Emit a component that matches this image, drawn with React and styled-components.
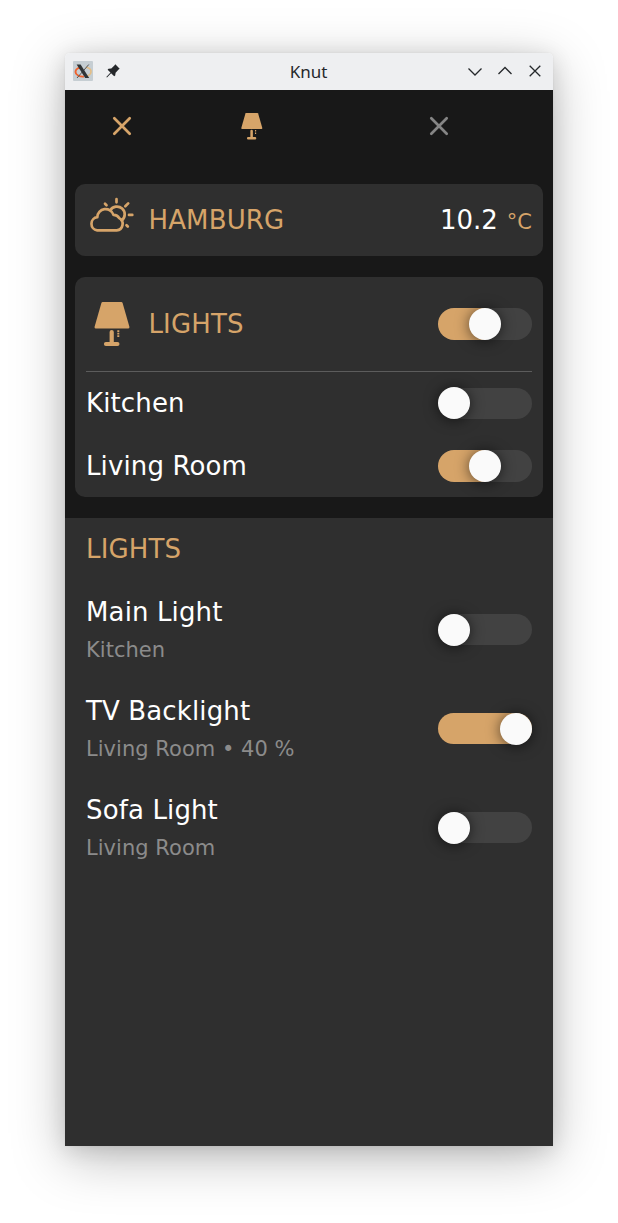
import React from "react";
import styled, { createGlobalStyle } from "styled-components";

const ACCENT = "#d6a469";

const GlobalStyle = createGlobalStyle`
  body {
    margin: 0;
    background: #fff;
    font-family: "DejaVu Sans", sans-serif;
  }
  svg { display: block; overflow: visible; }
`;

const Desktop = styled.div`
  box-sizing: border-box;
  height: 1223px;
  padding: 53px 65px 77px;
  overflow: hidden;
`;

const Window = styled.main`
  display: flex;
  flex-direction: column;
  height: 100%;
  border-radius: 5px 5px 0 0;
  box-shadow: 0 12px 54px rgba(0, 0, 0, 0.26), 0 4px 22px rgba(0, 0, 0, 0.12), 0 0 2px rgba(0, 0, 0, 0.08);
`;

const TitleBar = styled.header`
  display: grid;
  grid-template-columns: 1fr auto 1fr;
  align-items: center;
  height: 37px;
  box-sizing: border-box;
  padding: 0 10px 0 8px;
  background: #eeeff1;
  border-radius: 5px 5px 0 0;
`;

const Title = styled.h1`
  margin: 0;
  padding-left: 1px;
  font: 400 17px/24px "Noto Sans", sans-serif;
  color: #25282b;
`;

const TitleIcons = styled.div`
  display: flex;
  align-items: center;
  justify-content: ${(p) => (p.$end ? "flex-end" : "flex-start")};
  gap: ${(p) => (p.$end ? 14 : 13)}px;
  padding-bottom: ${(p) => (p.$end ? 2 : 1)}px;
`;

const Dashboard = styled.section`
  box-sizing: border-box;
  height: 428px;
  background: #181818;
`;

const Tabs = styled.nav`
  display: grid;
  grid-template-columns: 114px 146px 228px;
  align-items: center;
  justify-items: center;
  height: 72px;
  margin-bottom: 21.5px;
`;

const Card = styled.section`
  box-sizing: border-box;
  height: ${(p) => p.$height}px;
  margin: 0 10.4px 21px;
  padding: 0 10.6px;
  border-radius: 10px;
  background: #2f2f2f;
`;

const CardHeader = styled.div`
  display: flex;
  align-items: center;
  height: ${(p) => p.$height}px;
  border-bottom: ${(p) => (p.$divided ? "1px solid #5c5c5c" : "0")};
`;

const IconSlot = styled.div`
  display: flex;
  justify-content: center;
  width: 52px;
  margin-right: 10.5px;
  padding-bottom: ${(p) => p.$lift || 0}px;
`;

const Heading = styled.h2`
  flex: 1;
  margin: 0;
  font-size: 26px;
  line-height: 32px;
  font-weight: 400;
  letter-spacing: 0.15px;
  color: ${ACCENT};
`;

const Value = styled.span`
  font-size: 26px;
  letter-spacing: 0;
  color: #fff;
`;

const Unit = styled.span`
  margin-left: 9px;
  padding-top: 5px;
  font-size: 21px;
  color: ${ACCENT};
`;

const Row = styled.div`
  display: flex;
  align-items: center;
  justify-content: space-between;
  height: ${(p) => p.$height}px;
`;

const Name = styled.div`
  font-size: 26px;
  line-height: 32px;
  letter-spacing: 0.13px;
  color: #fff;
`;

const Detail = styled.div`
  margin-top: 9px;
  font-size: 21px;
  line-height: 26px;
  letter-spacing: 0.03px;
  color: #8b8b8b;
`;

const Panel = styled.section`
  flex: 1;
  padding: 15px 21px 0;
  background: #2f2f2f;
`;

const LightList = styled.div`
  padding-top: 15px;
`;

const Track = styled.div`
  display: flex;
  align-items: center;
  justify-content: ${(p) => ({ off: "flex-start", partial: "center", on: "flex-end" })[p.$state]};
  flex: none;
  width: 94px;
  height: 31.5px;
  border-radius: 16px;
  background: ${(p) =>
    ({
      off: "#424242",
      partial: `linear-gradient(90deg, ${ACCENT} 50%, #424242 50%)`,
      on: ACCENT,
    })[p.$state]};
`;

const Knob = styled.span`
  width: 32px;
  height: 32px;
  flex: none;
  border-radius: 50%;
  background: #fafafa;
  box-shadow: 0 1px 14px rgba(0, 0, 0, 0.6);
`;

const Switch = ({ state }) => (
  <Track $state={state}>
    <Knob />
  </Track>
);

const Lamp = ({ width }) => (
  <svg width={width} height={width * 1.25} viewBox="0 0 36 45" fill={ACCENT}>
    <path d="M8.6 0H27.4Q28.3 0 28.6 .9L35.4 24.7Q35.8 26.500 34.4 26.500H1.6Q.2 26.500 .6 24.700L7.4 .9Q7.700 0 8.600 0Z" />
    <path d="M17.700 28a2.100 2.100 0 0 1 2.100 2.100V40H23.500a2 2 0 0 1 0 4H11.900a2 2 0 0 1 0-4H15.600V30.100a2.100 2.100 0 0 1 2.100-2.100Z" />
    <path d="M24.300 28.300V35" stroke={ACCENT} strokeWidth="2" strokeDasharray="1.800 .7" />
  </svg>
);

const Cross = ({ color }) => (
  <svg width="20" height="20" viewBox="0 0 20 20" fill="none" stroke={color} strokeWidth="2.700" strokeLinecap="round">
    <path d="M2.300 2.300L17.700 17.700M17.700 2.300L2.300 17.700" />
  </svg>
);

const Weather = () => (
  <svg width="52" height="42" viewBox="0 0 52 42" fill="none" stroke={ACCENT} strokeWidth="2.700" strokeLinecap="round" strokeLinejoin="round">
    <path d="M11.200 36.300H30.700A6.500 6.500 0 0 0 33.200 24.100A6.300 6.300 0 0 0 27.500 20.800A8.300 8.300 0 0 0 11.300 23.200A6.600 6.600 0 0 0 11.200 36.300Z" />
    <path d="M24.300 16.200A7.800 7.800 0 1 1 35.700 26.500" />
    <path d="M30.500 5.200V8.300M43 20.900H46.300M39.300 12.300L42.200 9.400M19 9.800L20.500 11.300M40.500 31.200L41.800 32.500" />
  </svg>
);

const AppIcon = () => (
  <svg width="20" height="20" viewBox="0 0 20 20" fill="none">
    <rect width="20" height="20" rx="1" fill="#c6ced3" />
    <path d="M13 6.300C16 6.800 18.200 8.500 18 11C17.800 13.200 15.500 14.800 12.500 15.300" stroke="#e5bd83" strokeWidth="1.600" />
    <path d="M11 15.600C6.500 16 2.500 13.800 2.500 11C2.500 8.800 4.500 7.200 7 6.600" stroke="#f0622d" strokeWidth="1.900" />
    <path d="M15.800 3.500L4 17" stroke="#555" strokeWidth="1" />
    <path d="M3.600 3.500H7.600L16.200 17H12.200Z" fill="#303436" />
  </svg>
);

const Pin = () => (
  <svg width="14" height="14" viewBox="0 0 14 14" fill="#25282b">
    <path d="M9.300 .3L13.700 4.700L12.600 5.600L9.600 8.700L9.200 11.400L8.200 12.300L5.100 9.200L1 13.600L.3 13L4.500 8.500L1.600 5.700L2.500 4.700L5.300 4.400L8.400 1.400Z" />
  </svg>
);

const Chevron = ({ up }) => (
  <svg width="16" height="16" viewBox="0 0 16 16" fill="none" stroke="#25282b" strokeWidth="1.300">
    <path d={up ? "M1.500 11L8 4.500L14.500 11" : "M1.500 5.500L8 12L14.500 5.500"} />
  </svg>
);

const Close = () => (
  <svg width="16" height="16" viewBox="0 0 16 16" fill="none" stroke="#25282b" strokeWidth="1.300">
    <path d="M2.700 2.700L13.300 13.300M13.300 2.700L2.700 13.300" />
  </svg>
);

const rooms = [
  { name: "Kitchen", state: "off" },
  { name: "Living Room", state: "partial" },
];

const lights = [
  { name: "Main Light", detail: "Kitchen", state: "off" },
  { name: "TV Backlight", detail: "Living Room • 40 %", state: "on" },
  { name: "Sofa Light", detail: "Living Room", state: "off" },
];

export default function App() {
  return (
    <Desktop>
      <GlobalStyle />
      <Window>
        <TitleBar>
          <TitleIcons>
            <AppIcon />
            <Pin />
          </TitleIcons>
          <Title>Knut</Title>
          <TitleIcons $end>
            <Chevron />
            <Chevron up />
            <Close />
          </TitleIcons>
        </TitleBar>
        <Dashboard>
          <Tabs>
            <Cross color={ACCENT} />
            <Lamp width={21.6} />
            <Cross color="#858585" />
          </Tabs>
          <Card $height={72.5}>
            <CardHeader $height={72.5}>
              <IconSlot $lift={10}>
                <Weather />
              </IconSlot>
              <Heading>HAMBURG</Heading>
              <Value>10.2</Value>
              <Unit>°C</Unit>
            </CardHeader>
          </Card>
          <Card $height={220}>
            <CardHeader $height={94} $divided>
              <IconSlot>
                <Lamp width={36} />
              </IconSlot>
              <Heading>LIGHTS</Heading>
              <Switch state="partial" />
            </CardHeader>
            {rooms.map((room) => (
              <Row key={room.name} $height={62.5}>
                <Name>{room.name}</Name>
                <Switch state={room.state} />
              </Row>
            ))}
          </Card>
        </Dashboard>
        <Panel>
          <Heading>LIGHTS</Heading>
          <LightList>
            {lights.map((light) => (
              <Row key={light.name} $height={99}>
                <div>
                  <Name>{light.name}</Name>
                  <Detail>{light.detail}</Detail>
                </div>
                <Switch state={light.state} />
              </Row>
            ))}
          </LightList>
        </Panel>
      </Window>
    </Desktop>
  );
}
